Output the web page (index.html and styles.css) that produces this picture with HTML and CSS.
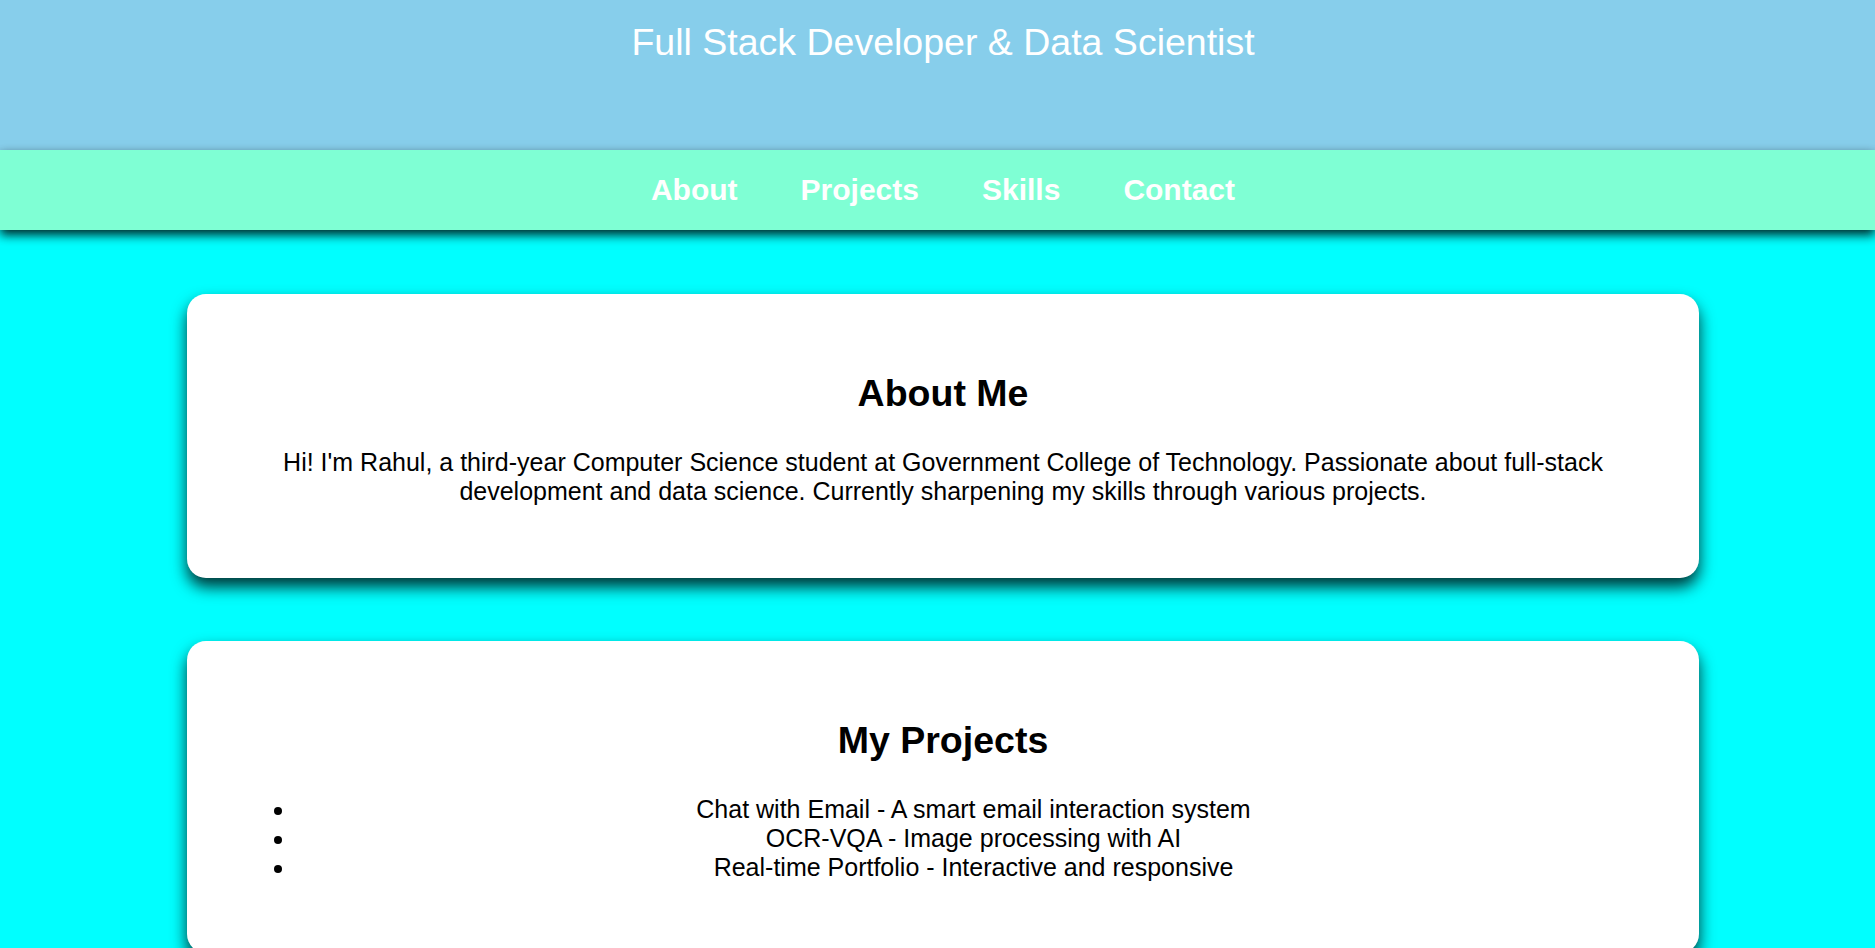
FILE: index.html
```html
<!DOCTYPE html>
<html lang="en">
<head>
<meta charset="utf-8">
<title>Rahul - Portfolio</title>
<link rel="stylesheet" href="styles.css">
</head>
<body>
<header class="site-header">
  <h1 class="site-title">Full Stack Developer &amp; Data Scientist</h1>
</header>
<nav class="site-nav">
  <a href="#about" class="nav-link">About</a>
  <a href="#projects" class="nav-link">Projects</a>
  <a href="#skills" class="nav-link">Skills</a>
  <a href="#contact" class="nav-link">Contact</a>
</nav>
<main class="content">
  <section class="card" id="about">
    <h2 class="card-title">About Me</h2>
    <p class="card-text">Hi! I'm Rahul, a third-year Computer Science student at Government College of Technology. Passionate about full-stack development and data science. Currently sharpening my skills through various projects.</p>
  </section>
  <section class="card" id="projects">
    <h2 class="card-title">My Projects</h2>
    <ul class="project-list">
      <li>Chat with Email - A smart email interaction system</li>
      <li>OCR-VQA - Image processing with AI</li>
      <li>Real-time Portfolio - Interactive and responsive</li>
    </ul>
  </section>
</main>
</body>
</html>
```
FILE: styles.css
```css
* { box-sizing: border-box; }

html, body {
  margin: 0;
  padding: 0;
}

body {
  font-family: "Liberation Sans", Arial, sans-serif;
  font-size: 25px;
  background: #00ffff;
  color: #000;
  text-align: center;
}

.site-header {
  background: #87ceeb;
  height: 150px;
  padding: 21px 0 0 11px;
}

.site-title {
  margin: 0;
  font-size: 37.5px;
  font-weight: normal;
  color: #fff;
  line-height: 43px;
}

.site-nav {
  position: relative;
  background: #7fffd4;
  height: 80px;
  padding-left: 11px;
  display: flex;
  justify-content: center;
  align-items: center;
  gap: 63px;
  box-shadow: 0 5px 10px rgba(0, 0, 0, 0.85);
}

.nav-link {
  color: #fff;
  font-weight: bold;
  font-size: 30px;
  text-decoration: none;
}

.content {
  padding: 64px 0 1px 11px;
}

.card {
  max-width: 1512px;
  margin: 0 auto 63px;
  background: #fff;
  border-radius: 19px;
  padding: 48px;
  box-shadow: 0 9px 16px rgba(0, 0, 0, 0.8);
}

.card-title {
  font-size: 37.5px;
  font-weight: bold;
  margin: 30px 0 33px;
}

.card-text {
  margin: 0 0 23.5px;
}

.project-list {
  margin: 0 0 23.5px;
  padding-left: 61px;
}
```
